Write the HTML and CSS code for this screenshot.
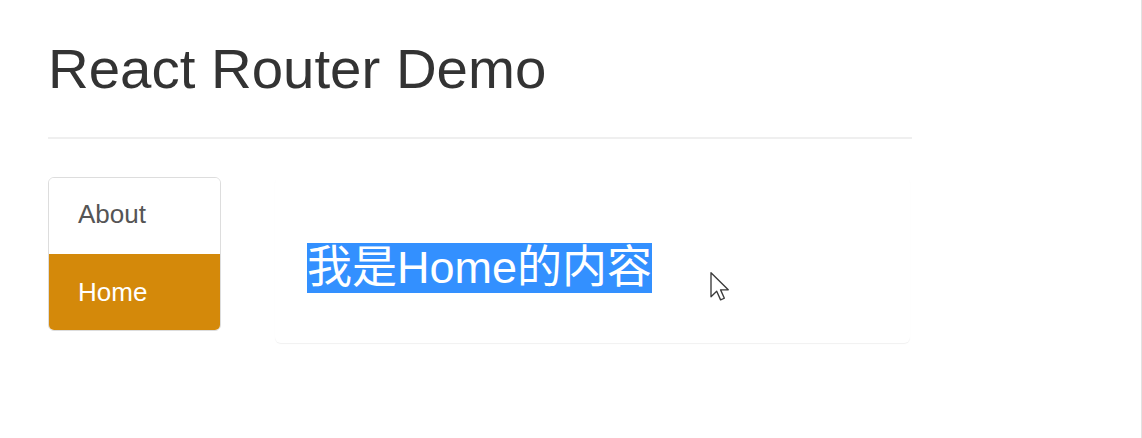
FILE: index.html
```html
<!DOCTYPE html>
<html lang="zh">
<head>
<meta charset="utf-8">
<title>React Router Demo</title>
<link rel="stylesheet" href="styles.css">
</head>
<body>
<div class="page">
  <div class="page-header">
    <h1>React Router Demo</h1>
  </div>
  <div class="main">
    <div class="list-group">
      <a class="item item-about">About</a>
      <a class="item item-active">Home</a>
    </div>
    <div class="panel">
      <div class="panel-body">
        <span class="selected">我是Home的内容</span>
      </div>
      <svg class="cursor" width="20" height="30" viewBox="0 0 13 20" aria-hidden="true">
        <path d="M0.5 0.5 L0.5 16.5 L4.3 12.8 L6.9 18.6 L9.4 17.5 L6.9 11.9 L12 11.9 Z" fill="#fff" stroke="#3a3a3a" stroke-width="0.9" stroke-linejoin="round"/>
      </svg>
    </div>
  </div>
</div>
</body>
</html>
```
FILE: styles.css
```css
html, body {
  margin: 0;
  padding: 0;
  background: #fff;
}
body {
  font-family: "Liberation Sans", Arial, "Noto Sans CJK SC", sans-serif;
  color: #333;
}
.page {
  box-sizing: border-box;
  width: 1142px;
  min-height: 438px;
  padding: 0 48px;
  border-right: 1px solid #e2e2e2;
}
.page-header {
  width: 864px;
  padding: 38px 0 37px;
  border-bottom: 2px solid #efefef;
}
.page-header h1 {
  margin: 0;
  font-size: 56.4px;
  line-height: 62px;
  font-weight: 400;
  color: #333;
}
.main {
  display: flex;
  align-items: flex-start;
  gap: 54px;
  margin-top: 38px;
}
.list-group {
  display: flex;
  flex-direction: column;
  width: 173px;
  box-sizing: border-box;
  border: 1px solid #dddddd;
  border-radius: 6px;
  overflow: hidden;
}
.item {
  display: block;
  height: 76px;
  padding: 0 29px;
  font-size: 26px;
  line-height: 76px;
  box-sizing: border-box;
}
.item-about {
  color: #555;
  background: #fff;
  line-height: 72px;
  padding-bottom: 4px;
}
.item-active {
  color: #fff;
  background: #d4890a;
}
.panel {
  position: relative;
  width: 635px;
  height: 166px;
  box-sizing: border-box;
  background: #fff;
  border: 1px solid transparent;
  border-radius: 6px;
  box-shadow: 0 1px 1px rgba(0, 0, 0, 0.06);
}
.panel-body {
  padding: 65px 31px 0;
}
.selected {
  display: inline-block;
  height: 50px;
  line-height: 50px;
  font-size: 45px;
  color: #fff;
  background: #3390ff;
  font-family: "Liberation Sans", Arial, "Noto Sans CJK SC", sans-serif;
}
.cursor {
  position: absolute;
  left: 434px;
  top: 94px;
}
```
